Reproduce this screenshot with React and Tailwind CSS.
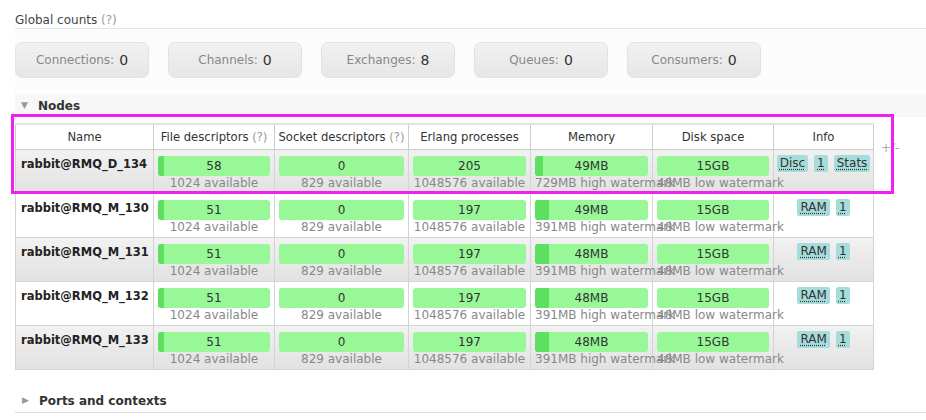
const counts = [
  ["Connections", 0],
  ["Channels", 0],
  ["Exchanges", 8],
  ["Queues", 0],
  ["Consumers", 0],
];

const nodes = [
  { name: "rabbit@RMQ_D_134", fd: 58, sd: 0, ep: 205, mem: 49, memHigh: 729, disk: "15GB", info: ["Disc", "1", "Stats"] },
  { name: "rabbit@RMQ_M_130", fd: 51, sd: 0, ep: 197, mem: 49, memHigh: 391, disk: "15GB", info: ["RAM", "1"] },
  { name: "rabbit@RMQ_M_131", fd: 51, sd: 0, ep: 197, mem: 48, memHigh: 391, disk: "15GB", info: ["RAM", "1"] },
  { name: "rabbit@RMQ_M_132", fd: 51, sd: 0, ep: 197, mem: 48, memHigh: 391, disk: "15GB", info: ["RAM", "1"] },
  { name: "rabbit@RMQ_M_133", fd: 51, sd: 0, ep: 197, mem: 48, memHigh: 391, disk: "15GB", info: ["RAM", "1"] },
];

const Bar = ({ value, pct, sub }) => (
  <div className="px-[4px] pt-[6px]">
    <div className="relative h-[20px] rounded-[3px] bg-[#98f898] overflow-hidden">
      <div className="absolute left-0 top-0 h-full bg-[#5fdf5f]" style={{ width: `${pct}%` }} />
      <div className="relative text-center leading-[20px] text-[#333]">{value}</div>
    </div>
    <div className="text-center whitespace-nowrap text-[#888] leading-[15px]">{sub}</div>
  </div>
);

const Q = () => <span className="text-[#999]">(?)</span>;

const App = () => {
  return (
    <div className="relative w-[926px] h-[420px] overflow-hidden bg-white text-[12px] text-[#444]" style={{ fontFamily: '"DejaVu Sans", Verdana, sans-serif' }}>
      <div className="pl-[15px] pt-[12px]">
        <div className="leading-[16px] text-[#444]">Global counts <Q /></div>
      </div>
      <div className="ml-[15px] border-t border-[#e4e4e4] bg-[#fcfcfc] h-[67px]">
        <div className="flex gap-[19px] pt-[13px]">
          {counts.map(([label, n]) => (
            <div key={label} className="w-[134px] h-[36px] rounded-[7px] border border-[#e2e2e2] bg-gradient-to-b from-[#f2f2f2] to-[#e6e6e6] flex items-center justify-center">
              <span className="text-[#888]">{label}:</span>
              <span className="ml-[5px] text-[14px] text-[#333]">{n}</span>
            </div>
          ))}
        </div>
      </div>
      <div className="ml-[15px] h-[22px] bg-[#f7f7f7] flex items-center font-bold text-[#333]">
        <span className="ml-[6px] mr-[10px] text-[9px] text-[#999]">▼</span>
        Nodes
      </div>
      <div className="ml-[15px] flex items-start">
        <table className="table-fixed border-collapse w-[858px] mt-[6px] border-t-[2px] border-[#e4e4e4]">
          <colgroup>
            <col className="w-[138px]" />
            <col className="w-[121px]" />
            <col className="w-[134px]" />
            <col className="w-[122px]" />
            <col className="w-[122px]" />
            <col className="w-[121px]" />
            <col className="w-[100px]" />
          </colgroup>
          <thead>
            <tr className="h-[25px] text-[11.6px]">
              <th className="font-normal border border-[#ccc] text-[#333] pt-[2px]">Name</th>
              <th className="font-normal border border-[#ccc] text-[#333] pt-[2px] whitespace-nowrap">File descriptors <Q /></th>
              <th className="font-normal border border-[#ccc] text-[#333] pt-[2px] whitespace-nowrap">Socket descriptors <Q /></th>
              <th className="font-normal border border-[#ccc] text-[#333] pt-[2px]">Erlang processes</th>
              <th className="font-normal border border-[#ccc] text-[#333] pt-[2px]">Memory</th>
              <th className="font-normal border border-[#ccc] text-[#333] pt-[2px]">Disk space</th>
              <th className="font-normal border border-[#ccc] text-[#333] pt-[2px]">Info</th>
            </tr>
          </thead>
          <tbody>
            {nodes.map((n, i) => (
              <tr key={n.name} className={i % 2 === 0 ? "h-[44px] bg-gradient-to-b from-[#f2f2f2] to-[#e2e2e2]" : "h-[44px] bg-white"}>
                <td className="align-top border border-[#d4d4d4] px-[5px] pt-[6px] font-bold text-[11.5px] text-[#222] whitespace-nowrap">{n.name}</td>
                <td className="align-top border border-[#d4d4d4] p-0"><Bar value={n.fd} pct={(n.fd / 1024) * 100} sub="1024 available" /></td>
                <td className="align-top border border-[#d4d4d4] p-0"><Bar value={n.sd} pct={0} sub="829 available" /></td>
                <td className="align-top border border-[#d4d4d4] p-0"><Bar value={n.ep} pct={0} sub="1048576 available" /></td>
                <td className="align-top border border-[#d4d4d4] p-0 overflow-visible"><Bar value={`${n.mem}MB`} pct={(n.mem / n.memHigh) * 100} sub={`${n.memHigh}MB high watermark`} /></td>
                <td className="align-top border border-[#d4d4d4] p-0 overflow-visible"><Bar value={n.disk} pct={0} sub="48MB low watermark" /></td>
                <td className="align-top border border-[#d4d4d4] pt-[5px]">
                  <div className="flex justify-center gap-[6px]">
                    {n.info.map((b) => (
                      <span key={b} className="px-[3px] h-[17px] leading-[17px] rounded-[2px] bg-[#a6dcdc] text-[#333] underline decoration-dotted underline-offset-2">{b}</span>
                    ))}
                  </div>
                </td>
              </tr>
            ))}
          </tbody>
        </table>
        <span className="ml-[7px] mt-[22px] text-[#aaa]">+/-</span>
      </div>
      <div className="ml-[15px] mt-[21px] h-[22px] border-b border-[#ddd] flex items-center font-bold text-[#333]">
        <span className="ml-[7px] mr-[10px] text-[9px] text-[#999]">▶</span>
        Ports and contexts
      </div>
      <div className="absolute left-[11px] top-[114px] w-[883px] h-[80px] border-[3px] border-[#f020f0] pointer-events-none" />
    </div>
  );
};

export default App;
